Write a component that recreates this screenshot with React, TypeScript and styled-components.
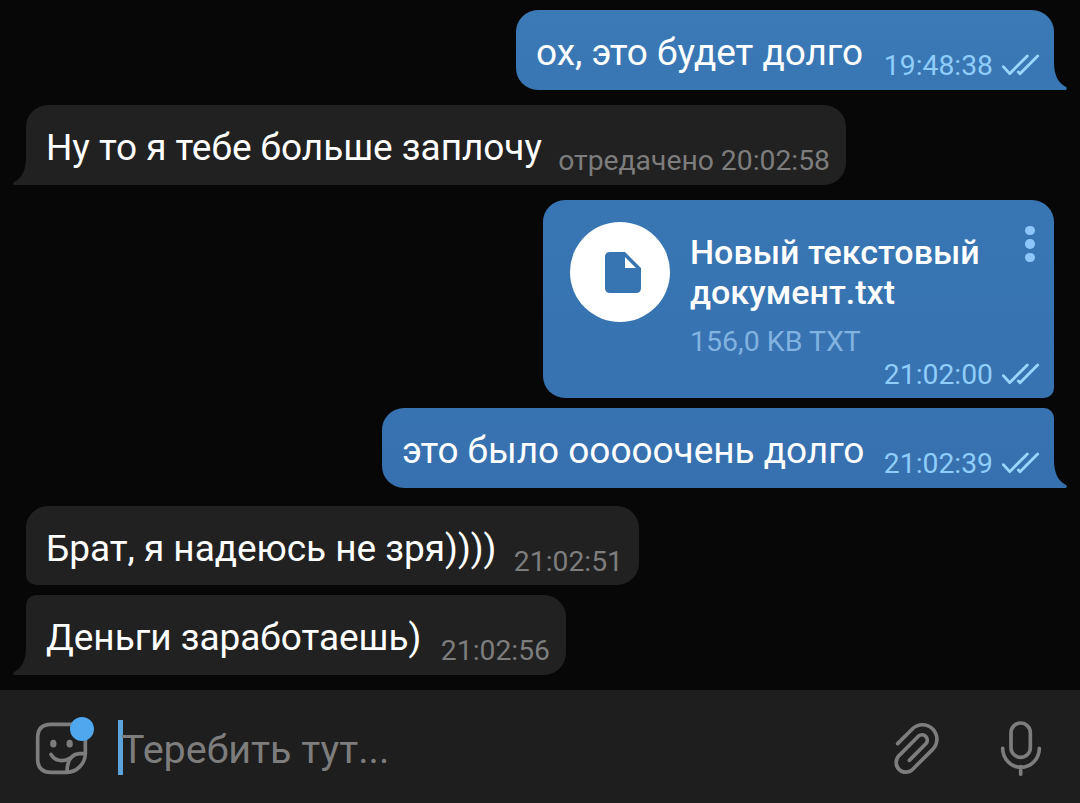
import styled, { createGlobalStyle, css } from 'styled-components';

const colors = {
  page: '#060706',
  incoming: '#212121',
  bar: '#1e1e1e',
  muted: '#7d7d7d',
  meta: '#8fcdfb',
  accent: '#4fa7ee',
};

const GlobalStyle = createGlobalStyle`
  * {
    box-sizing: border-box;
  }

  body {
    margin: 0;
    background: ${colors.page};
    font-family: Roboto, "Liberation Sans", sans-serif;
  }
`;

const Screen = styled.div`
  display: flex;
  flex-direction: column;
  width: 1080px;
  height: 803px;
  overflow: hidden;
  background: ${colors.page};
`;

const Messages = styled.main`
  flex: 1;
  display: flex;
  flex-direction: column;
  padding: 10px 26px 0;
`;

interface BubbleProps {
  $out?: boolean;
  $width: number;
  $height?: number;
  $gap?: number;
  $radius: string;
  $fill: string;
}

const Bubble = styled.div<BubbleProps>`
  position: relative;
  flex: none;
  display: flex;
  align-items: flex-start;
  justify-content: space-between;
  width: ${props => props.$width}px;
  height: ${props => props.$height ?? 80}px;
  margin-top: ${props => props.$gap ?? 0}px;
  padding: 0 16px 0 20px;
  border-radius: ${props => props.$radius};
  background: ${props => props.$fill};

  ${props => props.$out && css`
    align-self: flex-end;
    padding-right: 14px;
  `}
`;

const Text = styled.p`
  margin: 21px 0 0;
  color: #fff;
  font-size: 37px;
  line-height: 44px;
  letter-spacing: -0.04px;
  white-space: nowrap;
`;

const Meta = styled.span<{ $out?: boolean }>`
  display: flex;
  margin-top: 39px;
  color: ${props => (props.$out ? colors.meta : colors.muted)};
  font-size: 28.3px;
  line-height: 34px;
  white-space: nowrap;
`;

const Tail = styled.svg<{ $out?: boolean; $fill: string }>`
  position: absolute;
  bottom: 0;
  ${props => (props.$out ? 'right: -13px;' : 'left: -13px; transform: scaleX(-1);')}
  fill: ${props => props.$fill};
`;

const Checks = styled.svg`
  margin: 5px 0 0 9px;
  fill: none;
  stroke: #9bd6fc;
  stroke-width: 8.5;
  stroke-linecap: round;
  stroke-linejoin: round;
`;

const FileBubble = styled(Bubble)`
  padding: 22px 14px 0 27px;
  justify-content: flex-start;
`;

const FileIcon = styled.div`
  flex: none;
  display: flex;
  width: 100px;
  height: 100px;
  padding: 30px 0 0 35px;
  border-radius: 50%;
  background: #fff;
`;

const FileInfo = styled.div`
  flex: 1;
  display: flex;
  flex-direction: column;
  margin: 10px 0 0 20px;

  > ${Meta} {
    align-self: flex-end;
    margin-top: -1px;
  }
`;

const FileName = styled.div`
  color: #fff;
  font-size: 34px;
  font-weight: 500;
  line-height: 40px;
  white-space: nowrap;
`;

const FileSize = styled.div`
  margin-top: 13px;
  color: #81b3e0;
  font-size: 28.5px;
  line-height: 34px;
`;

const Dots = styled.div`
  position: absolute;
  top: 25.5px;
  right: 19.5px;
  display: flex;
  flex-direction: column;
  gap: 4px;

  > i {
    width: 9.5px;
    height: 9.5px;
    border-radius: 50%;
    background: #8cc6fb;
  }
`;

const InputBar = styled.footer`
  flex: none;
  display: flex;
  align-items: flex-start;
  height: 113px;
  padding-right: 34px;
  background: ${colors.bar};
`;

const BarIcon = styled.svg<{ $left: number; $top: number }>`
  flex: none;
  margin: ${props => props.$top}px 0 0 ${props => props.$left}px;
  fill: none;
  stroke: ${colors.muted};
  stroke-width: 11;
  stroke-linecap: round;
  stroke-linejoin: round;
`;

const Caret = styled.span`
  flex: none;
  width: 5px;
  height: 55px;
  margin: 30px 0 0 22px;
  background: #5ba3dc;
`;

const Placeholder = styled.span`
  flex: 1;
  margin: 36px 0 0 -2px;
  color: ${colors.muted};
  font-size: 39.5px;
  line-height: 48px;
  white-space: nowrap;
`;

function BubbleTail({ out, fill }: { out?: boolean; fill: string }) {
  return (
    <Tail $out={out} $fill={fill} width="14" height="28" viewBox="0 0 14 28">
      <path d="M0 0H1C1 13 5 21 13 25Q14.5 26 13 28H0Z" />
    </Tail>
  );
}

function ReadTime({ time }: { time: string }) {
  return (
    <Meta $out>
      {time}
      <Checks width="38" height="22" viewBox="426 160 114 66">
        <path d="M430 198L449 219L502 166" />
        <path d="M475 214L480 219L533 166" />
      </Checks>
    </Meta>
  );
}

export default function App() {
  return (
    <Screen>
      <GlobalStyle />
      <Messages>
        <Bubble
          $out
          $width={538}
          $radius="22px 22px 0 22px"
          $fill="linear-gradient(#3b7ab5, #3876b4)"
        >
          <Text>ох, это будет долго</Text>
          <ReadTime time="19:48:38" />
          <BubbleTail out fill="#3876b4" />
        </Bubble>

        <Bubble $width={820} $gap={15} $radius="22px 22px 22px 0" $fill={colors.incoming}>
          <Text>Ну то я тебе больше заплочу</Text>
          <Meta>отредачено 20:02:58</Meta>
          <BubbleTail fill={colors.incoming} />
        </Bubble>

        <FileBubble
          $out
          $width={511}
          $height={198}
          $gap={15}
          $radius="22px 22px 10px 22px"
          $fill="linear-gradient(#3876b3, #3772b1)"
        >
          <FileIcon>
            <svg width="36" height="41" viewBox="0 0 36 41">
              <path
                d="M5 0H20L36 16V36Q36 41 31 41H5Q0 41 0 36V5Q0 0 5 0ZM20 5V16H31Z"
                fill="#3774b2"
                fillRule="evenodd"
              />
            </svg>
          </FileIcon>
          <FileInfo>
            <FileName>
              Новый текстовый
              <br />
              документ.txt
            </FileName>
            <FileSize>156,0 KB TXT</FileSize>
            <ReadTime time="21:02:00" />
          </FileInfo>
          <Dots>
            <i />
            <i />
            <i />
          </Dots>
        </FileBubble>

        <Bubble
          $out
          $width={672}
          $gap={10}
          $radius="22px 10px 0 22px"
          $fill="linear-gradient(#3772b1, #3770af)"
        >
          <Text>это было ооооочень долго</Text>
          <ReadTime time="21:02:39" />
          <BubbleTail out fill="#3770af" />
        </Bubble>

        <Bubble
          $width={613}
          $height={79}
          $gap={18}
          $radius="22px 22px 22px 10px"
          $fill={colors.incoming}
        >
          <Text>Брат, я надеюсь не зря))))</Text>
          <Meta>21:02:51</Meta>
        </Bubble>

        <Bubble $width={540} $gap={10} $radius="10px 22px 22px 0" $fill={colors.incoming}>
          <Text>Деньги заработаешь)</Text>
          <Meta>21:02:56</Meta>
          <BubbleTail fill={colors.incoming} />
        </Bubble>
      </Messages>

      <InputBar>
        <BarIcon $left={35} $top={26} width="61" height="60" viewBox="105 78 183 180">
          <g transform="translate(0 -30)">
            <path d="M201 277H153Q113 277 113 237V173Q113 133 153 133H216Q256 133 256 173V221C256 250 230 277 201 277" />
            <path d="M256 221H238C215 223 201 241 201 277" />
            <path d="M153 223C163 241 186 249 211 234" />
            <ellipse cx="160" cy="191" rx="4" ry="6" fill={colors.muted} />
            <ellipse cx="209" cy="191" rx="4" ry="6" fill={colors.muted} />
            <circle cx="246" cy="147" r="36" fill={colors.accent} stroke="none" />
          </g>
        </BarIcon>
        <Caret />
        <Placeholder>Теребить тут...</Placeholder>
        <BarIcon $left={0} $top={30} width="50" height="60" viewBox="96 120 150 180">
          <path d="M113 191L157 147A43 43 0 0 1 218 208L157.500 268.500A29 29 0 0 1 116.500 227.500L175.750 168A16 16 0 0 1 198.250 190.500L148 241" />
        </BarIcon>
        <BarIcon $left={54} $top={20} width="50" height="80" viewBox="408 90 150 240">
          <rect x="453" y="129" width="58" height="103" rx="29" />
          <path d="M428 205A54 56 0 0 0 538 205M482 260V283" />
        </BarIcon>
      </InputBar>
    </Screen>
  );
}
